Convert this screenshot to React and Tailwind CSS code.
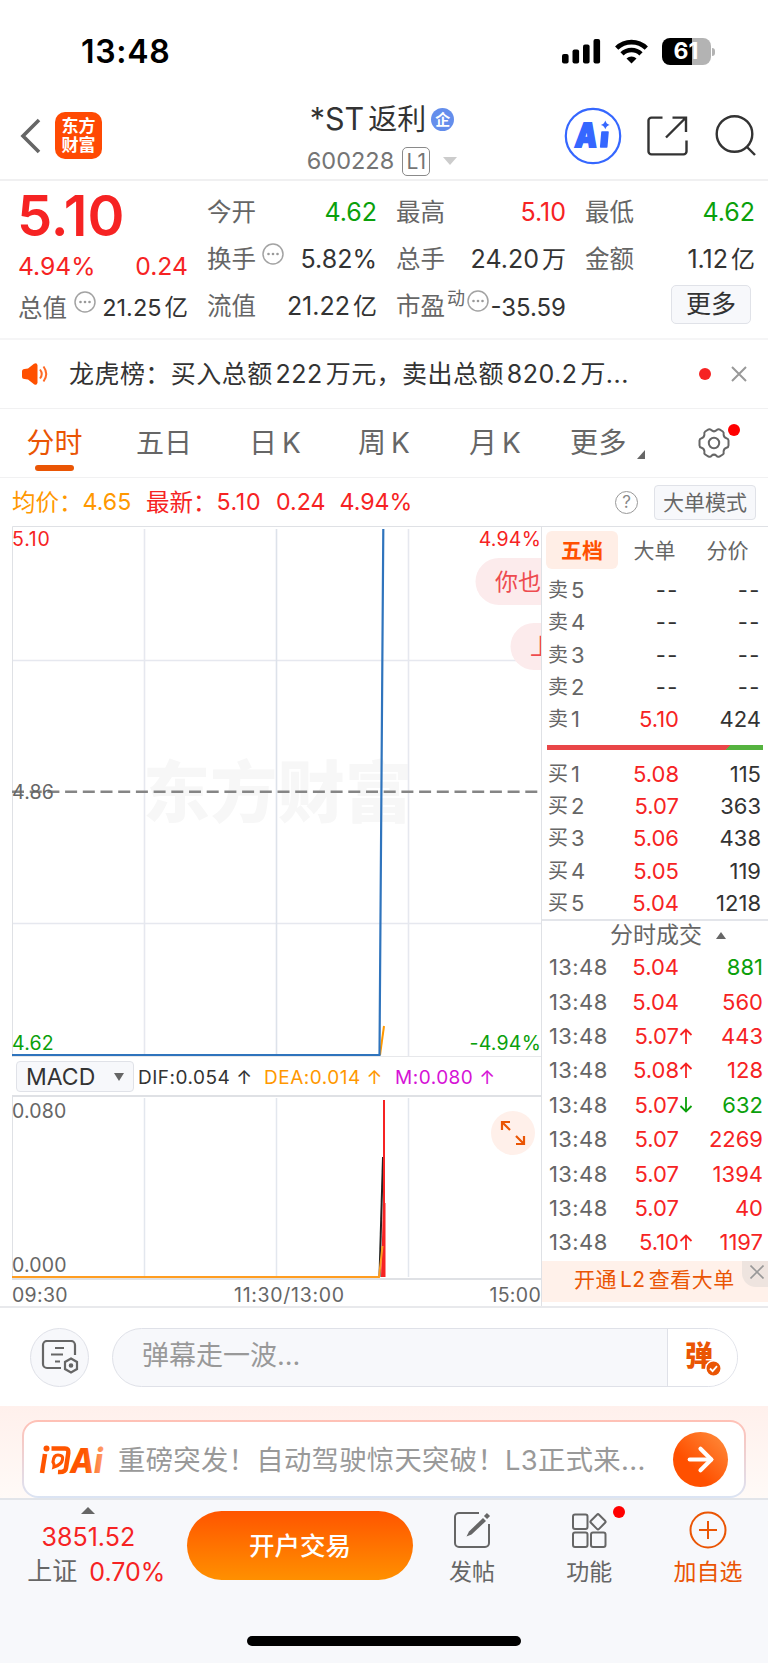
import { ArrowRight } from 'lucide-react';

const asks = [
  ['卖5', '--', '--'],
  ['卖4', '--', '--'],
  ['卖3', '--', '--'],
  ['卖2', '--', '--'],
  ['卖1', '5.10', '424'],
];

const bids = [
  ['买1', '5.08', '115'],
  ['买2', '5.07', '363'],
  ['买3', '5.06', '438'],
  ['买4', '5.05', '119'],
  ['买5', '5.04', '1218'],
];

const trades = [
  { price: '5.04', arrow: '', volume: '881', sell: true },
  { price: '5.04', arrow: '', volume: '560' },
  { price: '5.07', arrow: '↑', volume: '443' },
  { price: '5.08', arrow: '↑', volume: '128' },
  { price: '5.07', arrow: '↓', volume: '632', sell: true },
  { price: '5.07', arrow: '', volume: '2269' },
  { price: '5.07', arrow: '', volume: '1394' },
  { price: '5.07', arrow: '', volume: '40' },
  { price: '5.10', arrow: '↑', volume: '1197' },
];

function StatusBar() {
  return (
    <div className="flex h-[103px] items-center justify-between pl-[81px] pr-[53px]">
      <span className="text-[32px] leading-none font-semibold tracking-[0.7px] text-black">13:48</span>
      <div className="flex items-center">
        <svg width="39" height="25" viewBox="0 0 39 25" fill="#000">
          <rect x="0" y="15" width="6.6" height="9.5" rx="2" />
          <rect x="10.5" y="10.5" width="6.6" height="14" rx="2" />
          <rect x="21" y="5.5" width="6.6" height="19" rx="2" />
          <rect x="31.5" y="0" width="6.6" height="24.5" rx="2" />
        </svg>
        <svg className="ml-3.5" width="33" height="25" viewBox="0 0 33 25" fill="none" stroke="#000" strokeWidth="4.6">
          <path d="M1.7 9.2a21 21 0 0 1 29.6 0" />
          <path d="M7 14.9a13.5 13.5 0 0 1 19 0" />
          <path d="M16.5 24.5l-5-5a7.2 7.2 0 0 1 10 0z" fill="#000" stroke="none" />
        </svg>
        <div className="ml-3.5 flex h-[27px] w-[49px] items-center justify-center rounded-[8px] bg-[linear-gradient(90deg,#000_62%,#b3b3b3_62%)] text-[23px] leading-none font-bold text-white">
          61
        </div>
        <span className="ml-[1.5px] h-2 w-[3px] rounded-r-full bg-[#b3b3b3]" />
      </div>
    </div>
  );
}

function Header() {
  return (
    <header className="flex h-[78px] border-b-2 border-[#f0f0f1]">
      <div className="flex w-[250px] pt-[9px] pl-5">
        <svg className="mt-1.5" width="22" height="36" viewBox="0 0 22 36" fill="none" stroke="#666" strokeWidth="3.6">
          <path d="M19 2L3 18l16 16" />
        </svg>
        <div className="ml-[13px] flex h-[47px] w-[47px] flex-col items-center justify-center rounded-[10px] bg-[#ff4a03] text-[17px] leading-[19px] font-bold text-white">
          <span>东方</span>
          <span>财富</span>
        </div>
      </div>
      <div className="flex w-[264px] flex-col items-center">
        <div className="-mt-px flex h-[34px] items-center text-[#333]">
          <span className="text-[30.5px] leading-none">*ST</span>
          <span className="ml-1 text-[29px] leading-none">返利</span>
          <span className="ml-[5px] flex h-[23px] w-[23px] items-center justify-center rounded-full bg-[#648eec] text-[15px] leading-none font-bold text-white">
            企
          </span>
        </div>
        <div className="mt-[10px] flex h-[30px] items-center text-[#757575]">
          <span className="text-[23.5px] leading-none">600228</span>
          <span className="ml-2 flex h-[29px] w-7 items-center justify-center rounded-[5px] border border-[#8a8a8a] text-[21px] leading-none">
            L1
          </span>
          <svg className="ml-[13px]" width="14" height="8" viewBox="0 0 14 8" fill="#ccc">
            <path d="M0 0h14L7 8z" />
          </svg>
        </div>
      </div>
      <div className="flex flex-1 pt-[4px] pl-[50px]">
        <svg width="58" height="58" viewBox="0 0 58 58" fill="none">
          <circle cx="29" cy="29" r="27.2" stroke="#3567ff" strokeWidth="2.2" />
          <g transform="translate(4 0) skewX(-6)">
            <text x="10.5" y="40" fill="#3567ff" stroke="#3567ff" strokeWidth="1.8" fontSize="33" fontWeight="900" textLength="22" lengthAdjust="spacingAndGlyphs">A</text>
          </g>
          <path d="M38 25h6l-1.3 15h-6z" fill="#3567ff" stroke="#3567ff" strokeWidth="1.6" strokeLinejoin="round" />
          <path d="M41.3 13.5q1 3.6 4.4 4.4q-3.4 .8-4.4 4.4q-1-3.6-4.4-4.4q3.4-.8 4.4-4.4z" fill="#3567ff" />
        </svg>
        <svg className="mt-[8px] ml-[25px]" width="42" height="42" viewBox="0 0 42 42" fill="none" stroke="#333" strokeWidth="2.4">
          <path d="M15.5 2.6H4.5a3 3 0 0 0-3 3V36.4a3 3 0 0 0 3 3h32a3 3 0 0 0 3-3V25.5" />
          <path d="M25.5 2.6H39V17M38.5 3L19 22.5" />
        </svg>
        <svg className="mt-[7px] ml-[25px]" width="42" height="42" viewBox="0 0 42 42" fill="none" stroke="#333" strokeWidth="2.4">
          <circle cx="20.5" cy="20" r="17.8" />
          <path d="M33 33l8 8" />
        </svg>
      </div>
    </header>
  );
}

function MoreDots() {
  return (
    <svg className="mb-3 shrink-0" width="22" height="22" viewBox="0 0 22 22">
      <circle cx="11" cy="11" r="10" fill="none" stroke="#a3a3a3" strokeWidth="1.5" />
      <g fill="#999">
        <circle cx="6.5" cy="11" r="1.3" />
        <circle cx="11" cy="11" r="1.3" />
        <circle cx="15.5" cy="11" r="1.3" />
      </g>
    </svg>
  );
}

function Quote({ label, value, unit, color = 'text-[#333]', extra }) {
  return (
    <div className="flex h-[47px] items-center justify-between leading-none">
      <div className="flex items-center text-[24.5px] text-[#666]">
        {label}
        {extra}
      </div>
      <div className={`flex items-center text-[25px] ${color}`}>
        {value}
        {unit && <span className="ml-[3px] text-[24px]">{unit}</span>}
      </div>
    </div>
  );
}

function QuotePanel() {
  return (
    <section className="grid h-[159px] grid-cols-[170px_170px_170px_170px] gap-x-[19px] border-b-2 border-[#f5f5f6] pt-[8px] pl-[18px]">
      <div>
        <div className="flex h-[53px] items-center text-[56px] leading-none font-semibold text-[#f62323]">
          <span className="-ml-px">5.10</span>
        </div>
        <div className="flex h-[48px] items-center justify-between text-[24.7px] leading-none text-[#f62323]">
          <span>4.94%</span>
          <span>0.24</span>
        </div>
        <div className="flex h-[36px] items-center justify-between leading-none">
          <span className="text-[24.5px] text-[#666]">总值</span>
          <MoreDots />
          <span className="flex items-center text-[23.5px] text-[#333]">
            21.25<span className="ml-[3px]">亿</span>
          </span>
        </div>
      </div>
      <div>
        <Quote label="今开" value="4.62" color="text-[#0ba00b]" />
        <Quote label="换手" value="5.82%" extra={<span className="ml-1.5"><MoreDots /></span>} />
        <Quote label="流值" value="21.22" unit="亿" />
      </div>
      <div>
        <Quote label="最高" value="5.10" color="text-[#f62323]" />
        <Quote label="总手" value="24.20" unit="万" />
        <div className="flex h-[47px] items-center leading-none">
          <span className="text-[24.5px] text-[#666]">市盈</span>
          <span className="mb-4 ml-0.5 text-[18px] text-[#666]">动</span>
          <span className="ml-0.5"><MoreDots /></span>
          <span className="mt-0.5 ml-auto text-[24px] text-[#333]">-35.59</span>
        </div>
      </div>
      <div>
        <Quote label="最低" value="4.62" color="text-[#0ba00b]" />
        <Quote label="金额" value="1.12" unit="亿" />
        <div className="mt-[2px] mr-1 ml-auto flex h-[39px] w-[80px] items-center justify-center rounded-[5px] border-[1.5px] border-[#e0e2e8] bg-[#f7f8fb] text-[25px] leading-none text-[#333]">
          更多
        </div>
      </div>
    </section>
  );
}

function NewsBar() {
  return (
    <div className="flex h-[69px] items-center border-b border-[#f1f1f2] pl-[22px] text-[25px] leading-none text-[#333]">
      <svg width="27" height="22" viewBox="0 0 27 22">
        <path d="M0 8.5q0-2.5 2.5-2.5L6 5.500L12 .8q3-1.500 3.500 1.500v17.400q-.5 3-3.500 1.500L6 16.500 2.500 16Q0 16 0 13.500z" fill="#ff5000" />
        <path d="M18 6.500q3.500 4.500 0 9M21.500 3.500q5.500 7.500 0 15" fill="none" stroke="#ff6a26" strokeWidth="2" />
      </svg>
      <span className="ml-5 w-[560px] tracking-[0.45px] whitespace-nowrap">
        龙虎榜：买入总额<span className="mx-[3px]">222</span>万元，卖出总额<span className="mx-[3px]">820.2</span>万...
      </span>
      <span className="ml-[70px] h-3 w-3 rounded-full bg-[#f62323]" />
      <svg className="ml-[20px]" width="16" height="16" viewBox="0 0 16 16" stroke="#999" strokeWidth="2">
        <path d="M1 1l14 14M15 1L1 15" />
      </svg>
    </div>
  );
}

function PeriodTabs() {
  return (
    <nav className="flex h-[69px] border-b border-[#f1f1f2] text-[28px] leading-none text-[#666]">
      <div className="flex w-[109px] flex-col items-center">
        <span className="mt-[20px] text-[#ea5504]">分时</span>
        <span className="mt-[8px] h-1.5 w-[39px] rounded-full bg-[#ea5504]" />
      </div>
      <span className="mt-[20px] w-[110px] text-center">五日</span>
      <span className="mt-[20px] w-[112px] text-center">日<span className="ml-[5px]">K</span></span>
      <span className="mt-[20px] w-[106px] text-center">周<span className="ml-[5px]">K</span></span>
      <span className="mt-[20px] w-[116px] text-center">月<span className="ml-[5px]">K</span></span>
      <div className="mt-[20px] flex items-end self-start pl-[17px]">
        <span className="tracking-[0.5px]">更多</span>
        <svg className="mb-[-2px] ml-2.5" width="8" height="9" viewBox="0 0 8 9" fill="#666">
          <path d="M8 0v9H0z" />
        </svg>
      </div>
      <div className="relative mt-[18px] ml-[53px] h-8 w-8">
        <svg width="32" height="32" viewBox="0 0 32 32" fill="none" stroke="#666" strokeWidth="2">
          <path d="M10.5 2.5q2-.8 3 .8q2.5 2.2 5 0q1-1.6 3-.8l3.3 2q1.3 1 .8 3q0 2.8 2.9 3.8q2 .5 2 2.3v4.8q0 1.8-2 2.3q-2.9 1-2.9 3.8q.5 2-.8 3l-3.3 2q-2 .8-3-.8q-2.5-2.2-5 0q-1 1.6-3 .8l-3.3-2q-1.3-1-.8-3q0-2.8-2.9-3.8q-2-.5-2-2.3v-4.8q0-1.8 2-2.3q2.9-1 2.9-3.8q-.5-2 .8-3z" />
          <circle cx="16" cy="16" r="5.2" />
        </svg>
        <span className="absolute -top-[3px] -right-[10px] h-3 w-3 rounded-full bg-[#f00]" />
      </div>
    </nav>
  );
}

function AverageRow() {
  return (
    <div className="flex h-[48px] items-center pt-px pr-3 pl-3 text-[23.2px] leading-none text-[#f62323]">
      <span className="flex w-[134px] items-center text-[#ff9800]">
        <span className="text-[23.5px]">均价：</span>4.65
      </span>
      <span className="flex w-[130px] items-center">
        <span className="text-[23.5px]">最新：</span><span className="tracking-[0.6px]">5.10</span>
      </span>
      <span>0.24</span>
      <span className="ml-[14px]">4.94%</span>
      <span className="ml-auto flex h-[23px] w-[23px] items-center justify-center rounded-full border-[1.5px] border-[#999] text-[17px] text-[#888]">?</span>
      <span className="ml-4 flex h-[35px] w-[102px] items-center justify-center rounded-[4px] border-[1.5px] border-[#e0e2e8] bg-[#f7f8fb] text-[21px] text-[#666]">
        大单模式
      </span>
    </div>
  );
}

function PriceChart() {
  return (
    <svg width="541" height="531" viewBox="0 526 541 531" className="block">
      <text x="143" y="817" fontSize="67" fontWeight="900" fill="#f7f7f7" textLength="269">东方财富</text>
      <g stroke="#e6e8ef" strokeWidth="1.6">
        <path d="M144.500 529V1056M408.500 529V1056M12 660.500H541M12 923.500H541" />
        <path d="M276.500 529V1056" stroke="#dde2ea" />
      </g>
      <path d="M12.500 1057V526.500H541" fill="none" stroke="#dfe1e5" />
      <path d="M12 1057H541" stroke="#dfe1e5" strokeWidth="1.5" />
      <path d="M12 791.700H541" stroke="#858585" strokeWidth="2.5" strokeDasharray="12 5.7" />
      <g fontSize="19.5" letterSpacing="0.2">
        <text x="12" y="546" fill="#f62323" letterSpacing="0.8">5.10</text>
        <text x="541" y="546" fill="#f62323" textAnchor="end">4.94%</text>
        <text x="12" y="798.500" fill="#666">4.86</text>
        <text x="12" y="1050" fill="#0ba00b">4.62</text>
        <text x="541" y="1050" fill="#0ba00b" textAnchor="end">-4.94%</text>
      </g>
      {/* floating comments sliding in from the right edge */}
      <g fill="#fcebec">
        <path d="M542 558H499a23.500 23.500 0 0 0 0 47H542z" />
        <path d="M542 623H534a23.500 23.500 0 0 0 0 47H542z" />
      </g>
      <g fill="#ee4b4f" fontSize="23">
        <text x="495" y="590">你也</text>
        <text x="530" y="655">上</text>
      </g>
      <path d="M380 1055L384 1026" stroke="#ff9800" strokeWidth="2" />
      <path d="M12 1055H379.500L383.300 529" fill="none" stroke="#2f74bd" strokeWidth="2.2" />
    </svg>
  );
}

function IndicatorRow() {
  return (
    <div className="flex h-[38px] items-center pl-4 text-[19px] leading-none tracking-[0.5px]">
      <span className="flex h-[31px] w-[118px] items-center justify-between rounded-[4px] border-[1.5px] border-[#e0e2e8] bg-[#f7f8fb] pt-0.5 pr-[9px] pl-[9px] text-[23px] tracking-normal text-[#333]">
        MACD
        <svg width="10" height="8" viewBox="0 0 10 8" fill="#666">
          <path d="M0 0h10L5 8z" />
        </svg>
      </span>
      <span className="mt-0.5 ml-1 w-[126px] whitespace-nowrap text-[#333]">DIF:0.054 ↑</span>
      <span className="mt-0.5 w-[131px] whitespace-nowrap text-[#ff9800]">DEA:0.014 ↑</span>
      <span className="mt-0.5 whitespace-nowrap text-[#d613d6]">M:0.080 ↑</span>
    </div>
  );
}

function MacdChart() {
  return (
    <svg width="541" height="185" viewBox="0 1095 541 185" className="block">
      <path d="M12 1096H541" stroke="#dfe1e5" strokeWidth="2" />
      <path d="M12.500 1096V1279" stroke="#dfe1e5" />
      <path d="M144.500 1098V1277M276.500 1098V1277M408.500 1098V1277" stroke="#e3e7ee" strokeWidth="1.5" />
      <path d="M12 1279H541" stroke="#dfe1e5" strokeWidth="2" />
      <g fontSize="19.5" fill="#666" letterSpacing="0.2">
        <text x="12" y="1118">0.080</text>
        <text x="12" y="1272">0.000</text>
      </g>
      <path d="M379.500 1277L383 1157" stroke="#222" strokeWidth="2" />
      <path d="M384 1100V1277" stroke="#f62323" strokeWidth="2" />
      <path d="M381 1277L383 1203H385.500V1277z" fill="#f62323" />
      <path d="M12 1277H379L382.500 1246" fill="none" stroke="#ff9d20" strokeWidth="2" />
      <circle cx="513" cy="1133" r="22" fill="#fff0ea" />
      <path d="M510 1130l-7.500-7.500M502 1130v-8h8M516 1136l7.500 7.500M524 1136v8h-8" fill="none" stroke="#ea5504" strokeWidth="2.2" />
    </svg>
  );
}

function OrderRow({ row }) {
  const [label, price, volume] = row;
  const empty = price === '--';
  return (
    <div className="flex h-[32.3px] items-center pr-[7px] pl-1.5 text-[22px] leading-none">
      <span className="flex w-[50px] items-center text-[#666]">
        <span className="mr-[3px] text-[20px]">{label[0]}</span>
        {label[1]}
      </span>
      <span className={`w-[81px] text-right ${empty ? 'tracking-[1.5px] text-[#333]' : 'text-[#f62323]'}`}>{price}</span>
      <span className={`flex-1 text-right text-[#333] ${empty ? 'tracking-[1.5px]' : ''}`}>{volume}</span>
    </div>
  );
}

function OrderBook() {
  return (
    <aside className="flex w-[227px] flex-col border-l border-[#dfe1e5]">
      <div className="flex h-[48px] border-t border-[#dfe1e5] pt-1 pl-1 text-[21px] leading-none text-[#666]">
        <span className="flex h-[38px] w-[72px] items-center justify-center rounded-[6px] bg-[#ffeee6] font-bold text-[#ff5000]">五档</span>
        <span className="flex h-[38px] w-[73px] items-center justify-center">大单</span>
        <span className="flex h-[38px] w-[73px] items-center justify-center">分价</span>
      </div>
      {asks.map((row) => <OrderRow key={row[0]} row={row} />)}
      <div className="mt-[10px] mr-[5px] mb-[7px] ml-[5px] h-[5px] bg-[linear-gradient(135deg,#e94648_83%,#55b33f_83%)]" />
      {bids.map((row) => <OrderRow key={row[0]} row={row} />)}
      <div className="flex h-[31px] items-center border-t-2 border-[#e3e5ea] pl-[68px] text-[23px] leading-none text-[#666]">
        分时成交
        <svg className="ml-[14px]" width="10" height="7" viewBox="0 0 10 7" fill="#666">
          <path d="M0 7h10L5 0z" />
        </svg>
      </div>
      {trades.map((t, i) => (
        <div key={i} className="flex h-[34.4px] items-center pr-[5px] pl-[7px] text-[22px] leading-none text-[#f62323]">
          <span className="w-[72px] tracking-[0.4px] text-[#666]">13:48</span>
          <span className="w-[58px] text-right">{t.price}</span>
          <span className={`w-3.5 ${t.arrow === '↓' ? 'text-[#0ba00b]' : ''}`}>
            {t.arrow && (
              <svg className={t.arrow === '↓' ? 'rotate-180' : ''} width="14" height="16" viewBox="0 0 14 16" fill="none" stroke="currentColor" strokeWidth="1.8">
                <path d="M7 16V1.500M1.500 7L7 1.500L12.500 7" />
              </svg>
            )}
          </span>
          <span className={`flex-1 text-right ${t.sell ? 'text-[#0ba00b]' : ''}`}>{t.volume}</span>
        </div>
      ))}
      <div className="mt-0.5 flex h-[41px] bg-[#fff1ea] pl-8 text-[21px] text-[#ea5504]">
        <span className="mt-[8px] w-[168px] leading-none tracking-[0.5px] whitespace-nowrap">
          开通<span className="mx-[3px]">L2</span>查看大单
        </span>
        <span className="ml-auto flex h-[26px] w-[26px] items-center justify-center rounded-bl-[14px] bg-[#eee4df] pb-1 pl-1">
          <svg width="14" height="14" viewBox="0 0 14 14" stroke="#999" strokeWidth="1.6">
            <path d="M.5.5l13 13M13.500.5l-13 13" />
          </svg>
        </span>
      </div>
    </aside>
  );
}

function BarrageBar() {
  return (
    <div className="flex h-[98px] items-center pl-[30px]">
      <div className="flex h-[59px] w-[59px] items-center justify-center rounded-full border border-[#dfe1e8] bg-[#f7f8fb]">
        <svg width="38" height="34" viewBox="0 0 38 34" fill="none" stroke="#666" strokeWidth="2.2">
          <path d="M20 28H6a4 4 0 0 1-4-4V5a4 4 0 0 1 4-4h24a4 4 0 0 1 4 4v10" />
          <path d="M14 8h9M10 14.500h12M14 21.500h5" />
          <path d="M30 18.500l6 3.500v7l-6 3.500-6-3.500v-7z" />
          <circle cx="30" cy="25.500" r="1.200" fill="#666" />
        </svg>
      </div>
      <div className="ml-[23px] flex h-[59px] w-[626px] overflow-hidden rounded-full border-[1.5px] border-[#dfe1e8] bg-[#f7f8fb]">
        <span className="flex-1 pt-[13px] pl-[29px] text-[27px] leading-none text-[#999]">弹幕走一波...</span>
        <div className="relative w-[70px] border-l-[1.5px] border-[#dfe1e8] bg-white">
          <span className="absolute top-[13px] left-[17px] text-[28px] leading-none font-black text-[#ea5504]">弹</span>
          <svg className="absolute top-[31px] left-[37px]" width="17" height="17" viewBox="0 0 17 17">
            <circle cx="8.5" cy="8.5" r="7.7" fill="#ea5504" stroke="#fff" strokeWidth="1.5" />
            <path d="M5 8.500l2.600 2.600L12 6.200" fill="none" stroke="#fff" strokeWidth="1.8" />
          </svg>
        </div>
      </div>
    </div>
  );
}

function AskAi() {
  return (
    <div className="h-[92px] bg-[linear-gradient(180deg,#fff0ec,#fffaf7)] px-[22px] pt-3.5">
      <div className="rounded-[16px] bg-[linear-gradient(180deg,#ffc0b5,#dbe4f4)] p-[2px]">
        <div className="flex h-[74px] items-center rounded-[14px] bg-white pl-4">
          <svg className="mt-0.5 overflow-visible" width="64" height="30" viewBox="0 0 64 30" fill="none">
            <defs>
              <linearGradient id="ask" x1="0" y1="0" x2="64" y2="0" gradientUnits="userSpaceOnUse">
                <stop offset="0.7" stopColor="#ff5500" />
                <stop offset="1" stopColor="#ffa070" />
              </linearGradient>
            </defs>
            <g stroke="url(#ask)" strokeWidth="4.5">
              <path d="M5 9L2 28" />
              <path d="M11.500 3.500H25Q29 3.500 28.300 8L26 23Q25.500 27.500 18 27" />
              <path d="M18 10q5.500 0 4.500 4.500q-.8 5-8.500 7.500q.6-2.500-1-5q.5-7 5-7z" strokeWidth="3.2" />
            </g>
            <circle cx="6.5" cy="3.5" r="3" fill="#ff5500" />
            <text x="30" y="27.500" fill="url(#ask)" fontSize="34" fontWeight="800" fontStyle="italic" textLength="33" lengthAdjust="spacingAndGlyphs">Ai</text>
          </svg>
          <span className="mt-[3px] ml-[14px] w-[536px] text-[27.3px] leading-none tracking-[0.35px] whitespace-nowrap text-[#999]">重磅突发！自动驾驶惊天突破！L3正式来...</span>
          <span className="ml-auto mr-4 flex h-[55px] w-[55px] shrink-0 items-center justify-center rounded-full bg-[linear-gradient(45deg,#ff5000_35%,#ff9040)] text-white">
            <ArrowRight size={37} strokeWidth={2.7} />
          </span>
        </div>
      </div>
    </div>
  );
}

function BottomNav() {
  return (
    <footer className="h-[165px] border-t-2 border-[#e2e5ea] bg-[#f7f8fb]">
      <div className="flex h-[136px]">
        <div className="flex w-[177px] flex-col items-center pt-[7px] text-[25px] leading-none text-[#f62323]">
          <svg width="14" height="7" viewBox="0 0 14 7" fill="#666">
            <path d="M0 7h14L7 0z" />
          </svg>
          <span className="mt-[11px]">3851.52</span>
          <div className="mt-[9px] flex gap-3 pl-4">
            <span className="text-[#666]">上证</span>
            <span className="mt-px">0.70%</span>
          </div>
        </div>
        <div className="mt-[11px] ml-[10px] flex h-[69px] w-[227px] items-center justify-center rounded-full bg-[linear-gradient(180deg,#ff5500,#ff9000)] text-[25.5px] leading-none font-medium text-white">
          开户交易
        </div>
        <div className="flex w-[117px] flex-col items-center pt-[11px] text-[23px] leading-none text-[#666]">
          <svg width="38" height="38" viewBox="0 0 38 38" fill="none" stroke="#666" strokeWidth="2">
            <path d="M26 2H6a4 4 0 0 0-4 4v26a4 4 0 0 0 4 4h26a4 4 0 0 0 4-4V13" />
            <path d="M13.500 25.500l2.500-5L30 7l3 3-14.500 13.500z" fill="#666" stroke="none" />
            <path d="M32.500 6.500l3-3" strokeWidth="4.5" />
          </svg>
          <span className="mt-[12px]">发帖</span>
        </div>
        <div className="flex w-[118px] flex-col items-center pt-[11px] text-[23px] leading-none text-[#666]">
          <div className="relative">
            <svg width="38" height="38" viewBox="0 0 38 38" fill="none" stroke="#666" strokeWidth="2">
              <rect x="3" y="3.5" width="14.5" height="14.5" rx="2" />
              <rect x="3" y="21.5" width="14.5" height="14.5" rx="2" />
              <rect x="21" y="21.5" width="14.5" height="14.5" rx="2" />
              <rect x="22.3" y="5" width="11.5" height="11.5" rx="1.5" transform="rotate(45 28 10.7)" />
            </svg>
            <span className="absolute -top-[5px] -right-[17px] h-3 w-3 rounded-full bg-[#f00]" />
          </div>
          <span className="mt-[12px]">功能</span>
        </div>
        <div className="flex w-[120px] flex-col items-center pt-[11px] text-[23px] leading-none text-[#ea5504]">
          <svg width="38" height="38" viewBox="0 0 38 38" fill="none" stroke="#ea5504" strokeWidth="2">
            <circle cx="19" cy="19" r="17.5" />
            <path d="M19 10v18M10 19h18" />
          </svg>
          <span className="mt-[12px]">加自选</span>
        </div>
      </div>
      <div className="mx-auto h-[10px] w-[274px] rounded-full bg-black" />
    </footer>
  );
}

export default function App() {
  return (
    <div className="h-[1663px] w-[768px] overflow-hidden bg-white font-['Inter','Noto_Sans_CJK_SC',sans-serif]">
      <StatusBar />
      <Header />
      <QuotePanel />
      <NewsBar />
      <PeriodTabs />
      <AverageRow />
      <main className="flex h-[782px] border-b-2 border-[#e8e9ec]">
        <div className="w-[541px]">
          <PriceChart />
          <IndicatorRow />
          <MacdChart />
          <div className="flex h-[28px] items-center pt-[3px] pl-3 text-[19.5px] leading-none tracking-[0.3px] text-[#666]">
            <span className="w-[222px]">09:30</span>
            <span className="tracking-[0.7px]">11:30/13:00</span>
            <span className="ml-auto">15:00</span>
          </div>
        </div>
        <OrderBook />
      </main>
      <BarrageBar />
      <AskAi />
      <BottomNav />
    </div>
  );
}
